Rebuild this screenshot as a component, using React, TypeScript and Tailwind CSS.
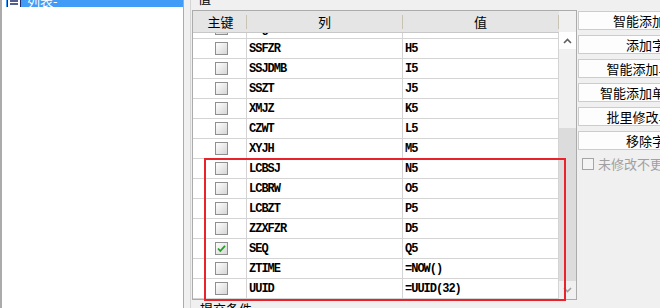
import React from "react";

type Row = { col: string; val: string; checked?: boolean };

const rows: Row[] = [
  { col: "\u00a0\u00a0g", val: "" },
  { col: "SSFZR", val: "H5" },
  { col: "SSJDMB", val: "I5" },
  { col: "SSZT", val: "J5" },
  { col: "XMJZ", val: "K5" },
  { col: "CZWT", val: "L5" },
  { col: "XYJH", val: "M5" },
  { col: "LCBSJ", val: "N5" },
  { col: "LCBRW", val: "O5" },
  { col: "LCBZT", val: "P5" },
  { col: "ZZXFZR", val: "D5" },
  { col: "SEQ", val: "Q5", checked: true },
  { col: "ZTIME", val: "=NOW()" },
  { col: "UUID", val: "=UUID(32)" },
];

const buttons = [
  "智能添加字段",
  "添加字段",
  "智能添加单字段",
  "智能添加单个字段",
  "批里修改单元格",
  "移除字段",
];

const cjk = { fontFamily: '"Noto Sans CJK SC", "Noto Sans", sans-serif' };
const mono = { fontFamily: '"Liberation Mono", "Noto Sans CJK SC", monospace' };

function CheckBox({ checked }: { checked?: boolean }) {
  return (
    <div className="w-[13px] h-[13px] border border-[#8f8f8f] bg-gradient-to-br from-[#ffffff] to-[#d6d6d6] flex items-center justify-center">
      {checked && (
        <svg width="11" height="11" viewBox="0 0 11 11">
          <path d="M2 5.5 L4.3 8 L9 2.8" fill="none" stroke="#22a022" strokeWidth="1.8" />
        </svg>
      )}
    </div>
  );
}

export default function App() {
  return (
    <div className="w-[660px] h-[308px] overflow-hidden bg-[#f0f0f0] flex relative" style={cjk}>
      {/* left list panel */}
      <div className="w-[184px] h-full shrink-0 bg-white border-l-2 border-r border-[#ababab] pl-[4px]">
        <div className="h-[7px] bg-[#409cf6] overflow-hidden flex items-end">
          <div className="flex items-end gap-[6px] pl-[1px] -mb-[2px]">
            <svg width="14" height="14" viewBox="0 0 14 14" className="shrink-0 mb-[1px]">
              <rect x="0.5" y="0.5" width="13" height="13" fill="#ffffff" stroke="#1d2a6e" />
              <rect x="0.5" y="0.5" width="13" height="3" fill="#1d2a6e" />
              <path d="M3 7 H11 M3 10 H11" stroke="#1d2a6e" strokeWidth="1.5" />
            </svg>
            <span className="text-white text-[13px] leading-[16px]">列表-</span>
          </div>
        </div>
      </div>

      <div className="w-[6px] shrink-0" />

      {/* middle group */}
      <div className="w-[388px] shrink-0 h-full flex flex-col border-l border-[#d4d4d4] pl-[1px]">
        <div className="h-[10px] shrink-0 overflow-hidden">
          <div className="-mt-[10px] ml-[6px] text-[13px] leading-[16px] text-black">值</div>
        </div>

        <div className="w-[385px] h-[290px] shrink-0 border border-[#ababab] flex">
          {/* grid */}
          <div className="w-[366px] flex flex-col">
            <div className="h-[22px] shrink-0 bg-[#e5e5e5] border-b border-[#c8c8c8] flex text-[13px] text-black">
              <div className="w-[54px] flex items-center">
                <span className="flex-1 text-center leading-[16px] pl-[2px]">主键</span>
                <div className="w-px h-[14px] bg-[#c9c3b6]" />
              </div>
              <div className="w-[156px] flex items-center">
                <span className="flex-1 text-center leading-[16px]">列</span>
                <div className="w-px h-[14px] bg-[#c9c3b6]" />
              </div>
              <div className="w-[156px] flex items-center">
                <span className="flex-1 text-center leading-[16px]">值</span>
                <div className="w-px h-[14px] bg-[#c9c3b6]" />
              </div>
            </div>
            <div className="h-[266px] shrink-0 overflow-hidden bg-white">
              <div className="-mt-[14px]">
                {rows.map((r, i) => (
                  <div key={i} className="h-[20px] flex border-b border-[#d4d4d4]">
                    <div className="w-[54px] border-r border-[#d4d4d4] flex items-center justify-center pl-[3px]">
                      <CheckBox checked={r.checked} />
                    </div>
                    <div
                      className="w-[156px] border-r border-[#d4d4d4] pl-[2px] pt-[1px] text-[12px] leading-[18px] font-bold text-black tracking-[-1px] whitespace-nowrap"
                      style={mono}
                    >
                      {r.col}
                    </div>
                    <div
                      className="w-[156px] border-r border-[#d4d4d4] pl-[2px] pt-[1px] text-[12px] leading-[18px] font-bold text-black tracking-[-1px] whitespace-nowrap"
                      style={mono}
                    >
                      {r.val}
                    </div>
                  </div>
                ))}
              </div>
            </div>
          </div>
          {/* scrollbar */}
          <div className="w-[17px] flex flex-col">
            <div className="h-[21px] shrink-0 bg-[#f0f0f0]" />
            <div className="h-[17px] shrink-0 bg-white flex items-center justify-center">
              <svg width="9" height="6" viewBox="0 0 9 6">
                <path d="M1 5 L4.5 1.5 L8 5" fill="none" stroke="#606060" strokeWidth="1.6" />
              </svg>
            </div>
            <div className="h-[79px] shrink-0 bg-[#f0f0f0]" />
            <div className="h-[153px] shrink-0 bg-[#dcdcdc]" />
            <div className="flex-1 bg-[#f0f0f0] flex items-center justify-center">
              <svg width="9" height="6" viewBox="0 0 9 6">
                <path d="M1 1 L4.5 4.5 L8 1" fill="none" stroke="#a0a0a0" strokeWidth="1.6" />
              </svg>
            </div>
          </div>
        </div>

        <div className="shrink-0 pl-[8px] mt-[1px] text-[13px] leading-[16px] text-black whitespace-nowrap">提交条件</div>
      </div>

      {/* right buttons */}
      <div className="flex flex-col pt-[11px] shrink-0">
        <div className="flex flex-col gap-[5px]">
          {buttons.map((b) => (
            <div
              key={b}
              className="w-[148px] h-[19px] shrink-0 border border-[#cccccc] bg-[#fdfdfd] flex items-center justify-center text-[13px] leading-[16px] text-black whitespace-nowrap"
            >
              {b}
            </div>
          ))}
        </div>
        <div className="flex items-center gap-[4px] mt-[6px] pl-[4px]">
          <div className="w-[12px] h-[12px] border border-[#a5a5a5] bg-[#f4f4f4]" />
          <span className="text-[13px] leading-[16px] text-[#a0a0a0] whitespace-nowrap">未修改不更新</span>
        </div>
      </div>

      {/* red annotation box */}
      <div className="absolute left-[204px] top-[158px] w-[362px] h-[143px] border-2 border-[#e8232b] pointer-events-none" />
    </div>
  );
}
